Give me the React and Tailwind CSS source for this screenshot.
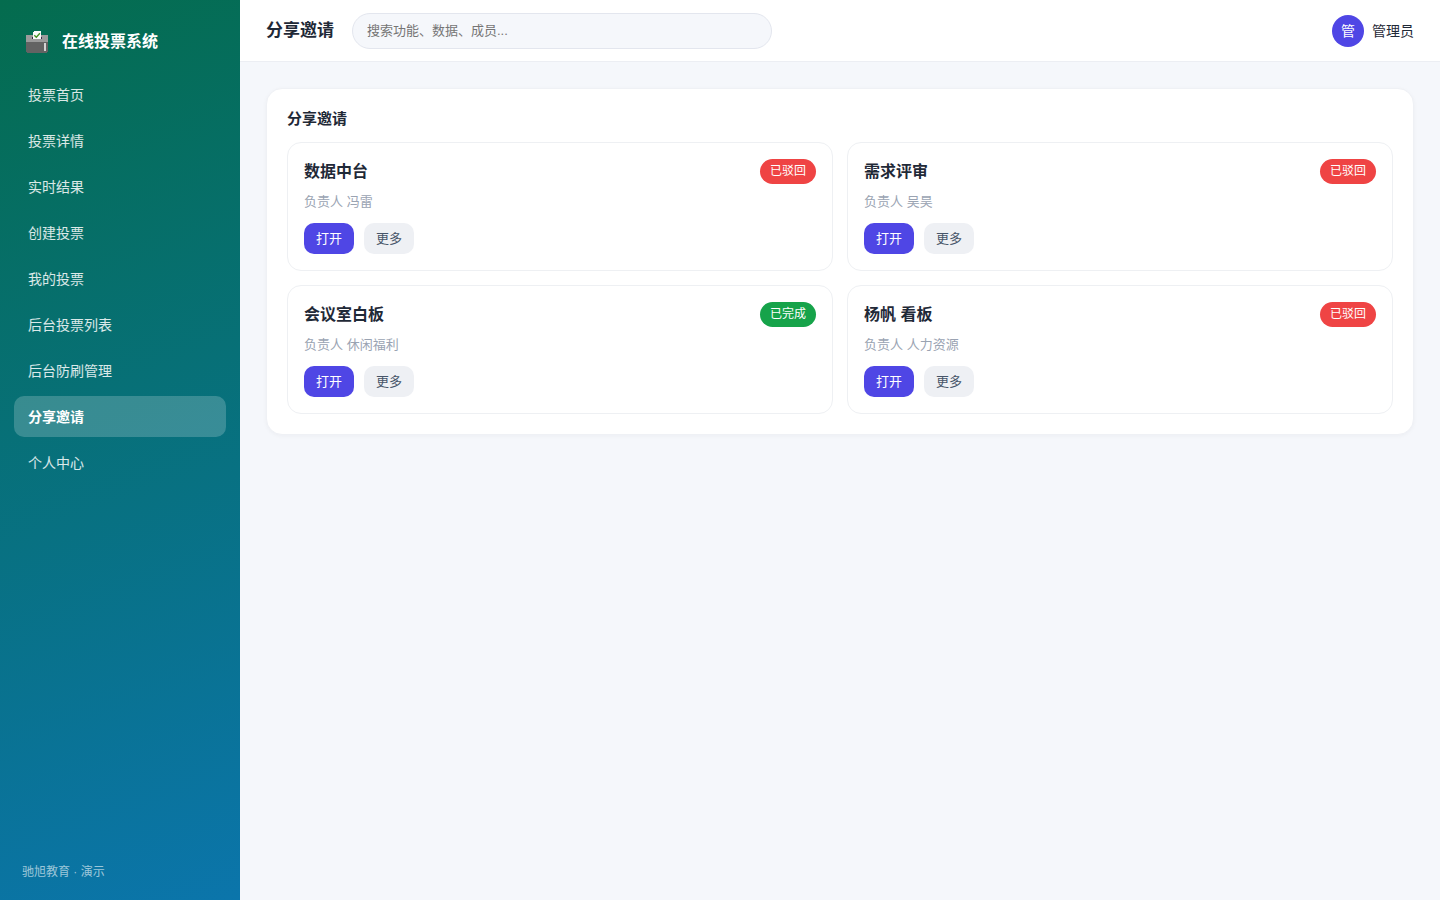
const navItems = [
    '投票首页',
    '投票详情',
    '实时结果',
    '创建投票',
    '我的投票',
    '后台投票列表',
    '后台防刷管理',
    '分享邀请',
    '个人中心',
];

const invites = [
    { id: 1, title: '数据中台', owner: '冯雷', status: '已驳回' },
    { id: 2, title: '需求评审', owner: '吴昊', status: '已驳回' },
    { id: 3, title: '会议室白板', owner: '休闲福利', status: '已完成' },
    { id: 4, title: '杨帆 看板', owner: '人力资源', status: '已驳回' },
];

const statusColors = {
    已驳回: 'bg-[#ef4444]',
    已完成: 'bg-[#16a34a]',
};

const BallotBox = () => (
    <svg viewBox="0 0 22 22" className="w-[22px] h-[22px]" shapeRendering="crispEdges" aria-hidden="true">
        <path d="M0 4h22v7H0z" fill="#9b9b9b" />
        <path d="M0 11h22v10h-1v1H1v-1H0z" fill="#636363" />
        <path d="M6 6h10v2H6z" fill="#3a2a4a" />
        <path d="M7 1h1V0h7v8H7z" fill="#fafafa" />
        <path d="M18 12h2v8h-2z" fill="#d4d4d4" />
        <path d="M8.3 4.2l2 2 3.6-4" fill="none" stroke="#3f8f1f" strokeWidth="1.3" shapeRendering="auto" />
    </svg>
);

const Sidebar = () => (
    <aside className="w-60 shrink-0 flex flex-col px-[14px] pt-6 pb-[18px] bg-[linear-gradient(160deg,#046c4e,#0b75ab)]">
        {/* Brand */}
        <div className="flex items-center gap-[14px] h-9 pl-3 mb-[14px] text-base font-bold text-white">
            <BallotBox />
            在线投票系统
        </div>

        <nav className="flex flex-col gap-[5px]">
            {navItems.map((item) => (
                <a
                    key={item}
                    href="#"
                    aria-current={item === '分享邀请' ? 'page' : undefined}
                    className={
                        item === '分享邀请'
                            ? 'flex items-center h-[41px] px-[14px] rounded-[10px] text-sm font-bold text-white bg-white/20'
                            : 'flex items-center h-[41px] px-[14px] rounded-[10px] text-sm text-white/85'
                    }
                >
                    {item}
                </a>
            ))}
        </nav>

        <div className="mt-auto pl-2 text-xs leading-5 text-white/60">驰旭教育 · 演示</div>
    </aside>
);

const Header = () => (
    <header className="flex items-center h-[62px] px-[26px] gap-[18px] bg-white border-b border-[#eceef3]">
        <h1 className="text-[17px] leading-7 font-bold">分享邀请</h1>
        <input
            type="search"
            aria-label="搜索"
            placeholder="搜索功能、数据、成员..."
            className="w-full max-w-[420px] h-9 px-[14px] rounded-full border border-[#e3e6ee] bg-[#f5f7fb] text-[13px] placeholder:text-[#757575] outline-none"
        />
        <div className="ml-auto flex shrink-0 items-center gap-2 text-sm">
            <span className="flex items-center justify-center w-8 h-8 rounded-full bg-[#4f46e5] text-sm text-white">
                管
            </span>
            管理员
        </div>
    </header>
);

const InviteCard = ({ invite }) => (
    <article className="p-4 rounded-[14px] border border-[#eef0f3] bg-white">
        <div className="flex items-center justify-between">
            <h3 className="text-base leading-[25px] font-bold">{invite.title}</h3>
            <span className={`px-[10px] rounded-full text-xs leading-[25px] text-white ${statusColors[invite.status]}`}>
                {invite.status}
            </span>
        </div>
        <p className="mt-2 text-[13px] leading-5 text-[#9aa3b2]">负责人 {invite.owner}</p>
        <div className="mt-[11px] flex gap-[10px]">
            <button type="button" className="h-[31px] px-3 rounded-[10px] bg-[#4f46e5] text-[13px] text-white">
                打开
            </button>
            <button type="button" className="h-[31px] px-3 rounded-[10px] bg-[#eef0f4] text-[13px] text-[#475569]">
                更多
            </button>
        </div>
    </article>
);

const App = () => {
    return (
        <div className="flex min-h-screen bg-[#f5f7fb] text-[#1f2937] font-['Liberation_Sans','Noto_Sans_CJK_SC',sans-serif]">
            <Sidebar />
            <div className="flex-1 min-w-0">
                <Header />
                <main className="p-[26px]">
                    <section className="p-5 rounded-2xl border border-[#eff1f5] bg-white shadow-[0_1px_4px_rgba(20,30,60,0.04)]">
                        <h2 className="mb-[14px] text-[15px] leading-[19px] font-bold">分享邀请</h2>
                        <div className="grid grid-cols-2 gap-[14px]">
                            {invites.map((invite) => (
                                <InviteCard key={invite.id} invite={invite} />
                            ))}
                        </div>
                    </section>
                </main>
            </div>
        </div>
    );
};

export default App;
